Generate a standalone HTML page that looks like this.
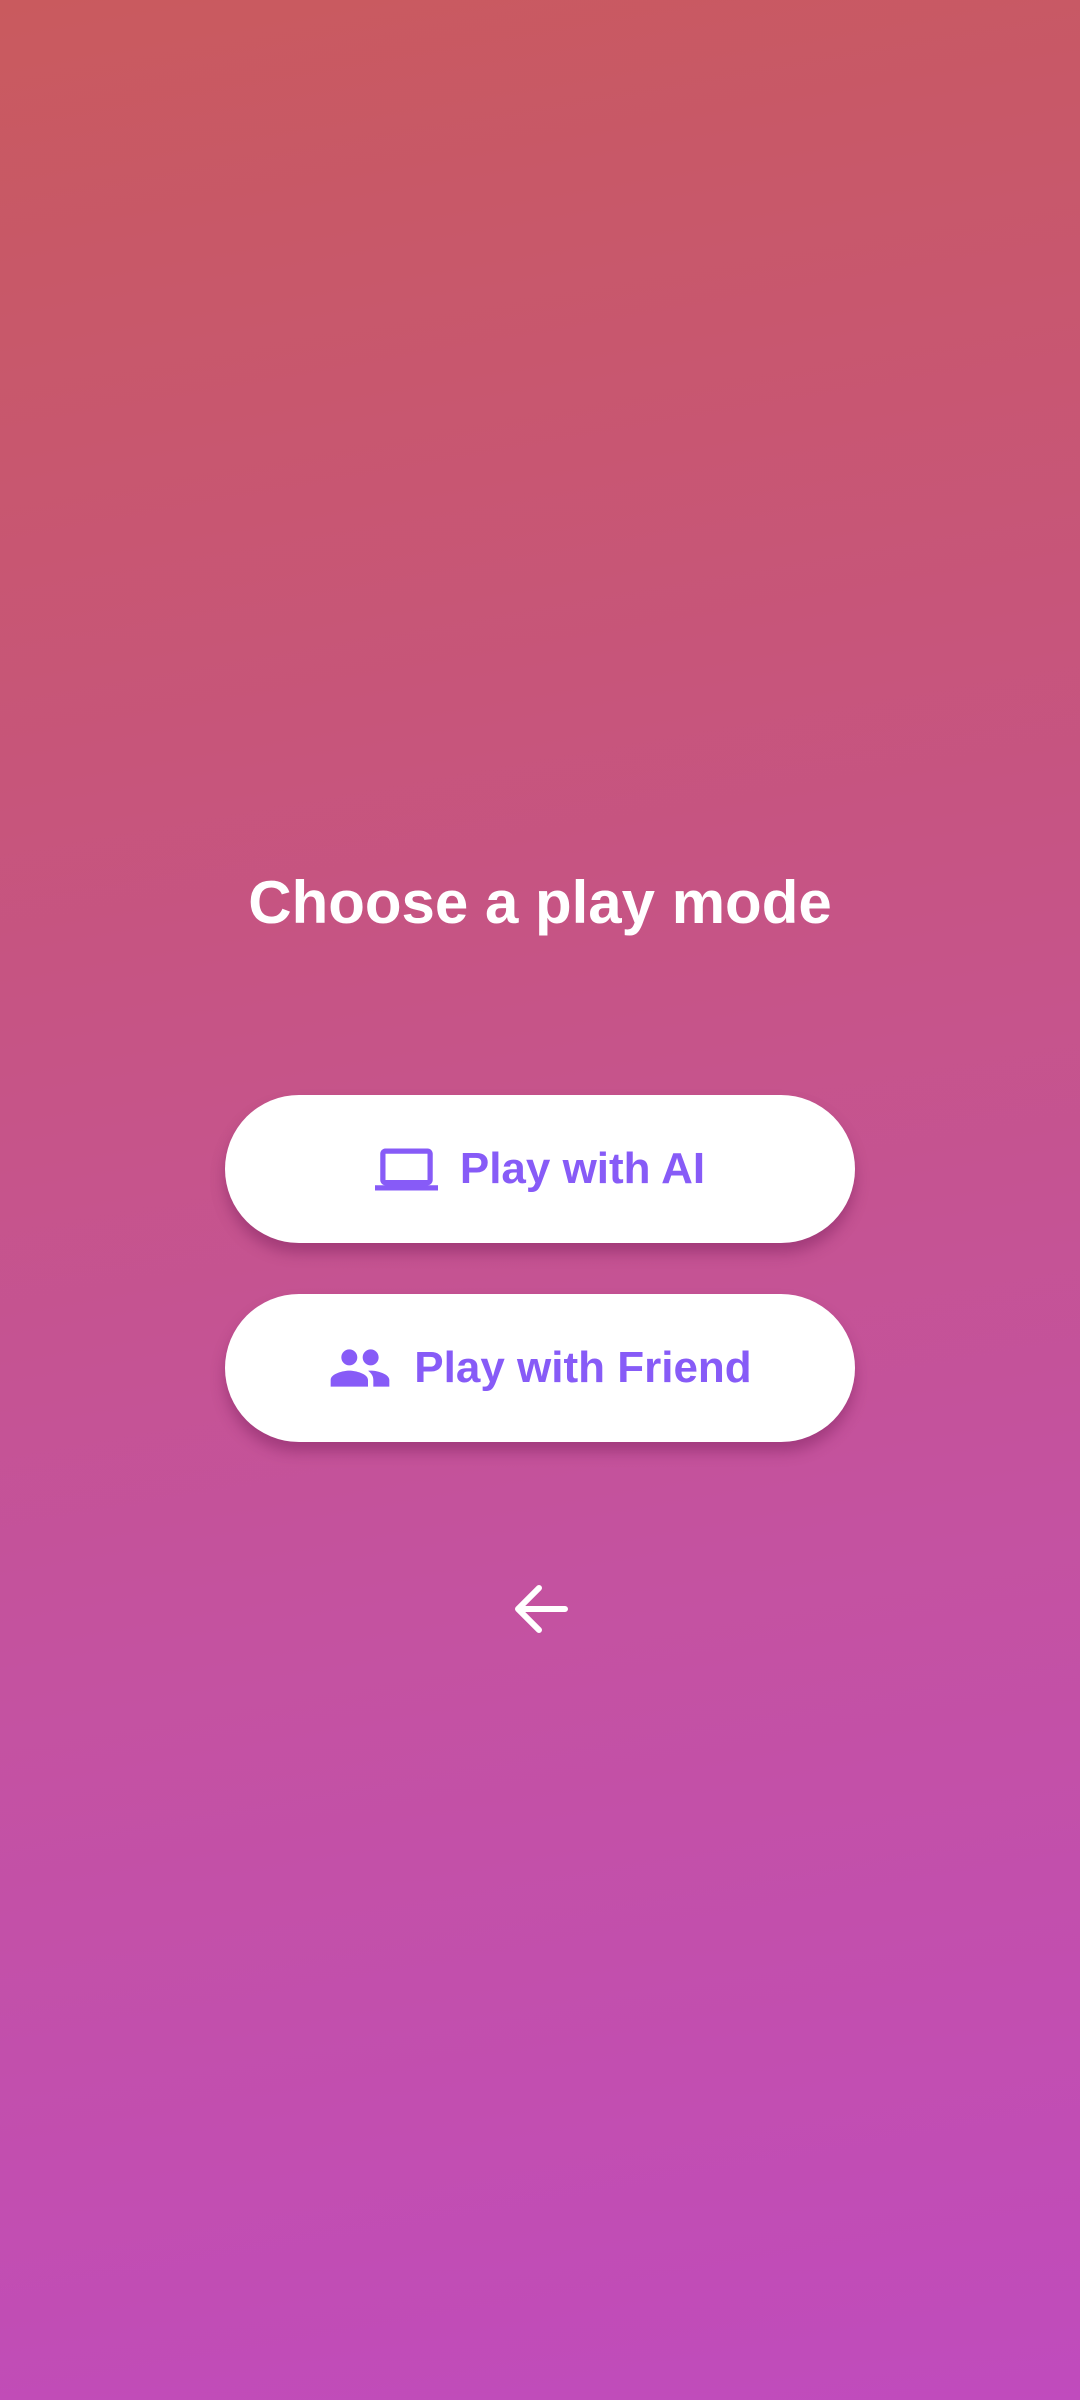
<!DOCTYPE html>
<html><head><meta charset="utf-8"><style>
html,body{margin:0;padding:0;width:1080px;height:2400px;overflow:hidden}
body{background:linear-gradient(170deg,#c95a5e 0%,#c7557a 30%,#c452a0 65%,#c04bbd 100%);position:relative;font-family:"Liberation Sans",sans-serif}
.title{position:absolute;left:0;width:1080px;top:864px;text-align:center;color:#fff;font-weight:bold;font-size:60px;line-height:78px;letter-spacing:0px}
.btn{position:absolute;left:225px;width:630px;height:148px;border-radius:74px;background:#fff;box-shadow:0 10px 14px rgba(120,30,90,0.45);display:flex;align-items:center;justify-content:center;color:#875bf7;font-weight:bold;font-size:44px}
.btn svg{fill:#875bf7;margin-right:22px}
</style></head><body>
<div class="title">Choose a play mode</div>
<div class="btn" style="top:1095px"><svg width="63" height="63" viewBox="0 0 24 24"><path d="M20 18c1.1 0 1.99-.9 1.99-2L22 6c0-1.1-.9-2-2-2H4c-1.1 0-2 .9-2 2v10c0 1.1.9 2 2 2H0v2h24v-2h-4zM4 6h16v10H4V6z"/></svg>Play with AI</div>
<div class="btn" style="top:1294px"><svg width="64" height="64" viewBox="0 0 24 24"><path d="M16 11c1.66 0 2.99-1.34 2.99-3S17.66 5 16 5c-1.66 0-3 1.34-3 3s1.34 3 3 3zm-8 0c1.66 0 2.99-1.34 2.99-3S9.66 5 8 5C6.340 5 5 6.34 5 8s1.34 3 3 3zm0 2c-2.33 0-7 1.17-7 3.5V19h14v-2.5c0-2.33-4.67-3.5-7-3.5zm8 0c-.29 0-.62.02-.97.05 1.16.84 1.97 1.97 1.97 3.45V19h6v-2.5c0-2.33-4.67-3.5-7-3.5z"/></svg>Play with Friend</div>
<svg style="position:absolute;left:510px;top:1580px" width="62" height="58" viewBox="0 0 62 58"><path d="M55 29H9M29 8L8 29l21 21" fill="none" stroke="#fff" stroke-width="6" stroke-linecap="round" stroke-linejoin="round"/></svg>
</body></html>
